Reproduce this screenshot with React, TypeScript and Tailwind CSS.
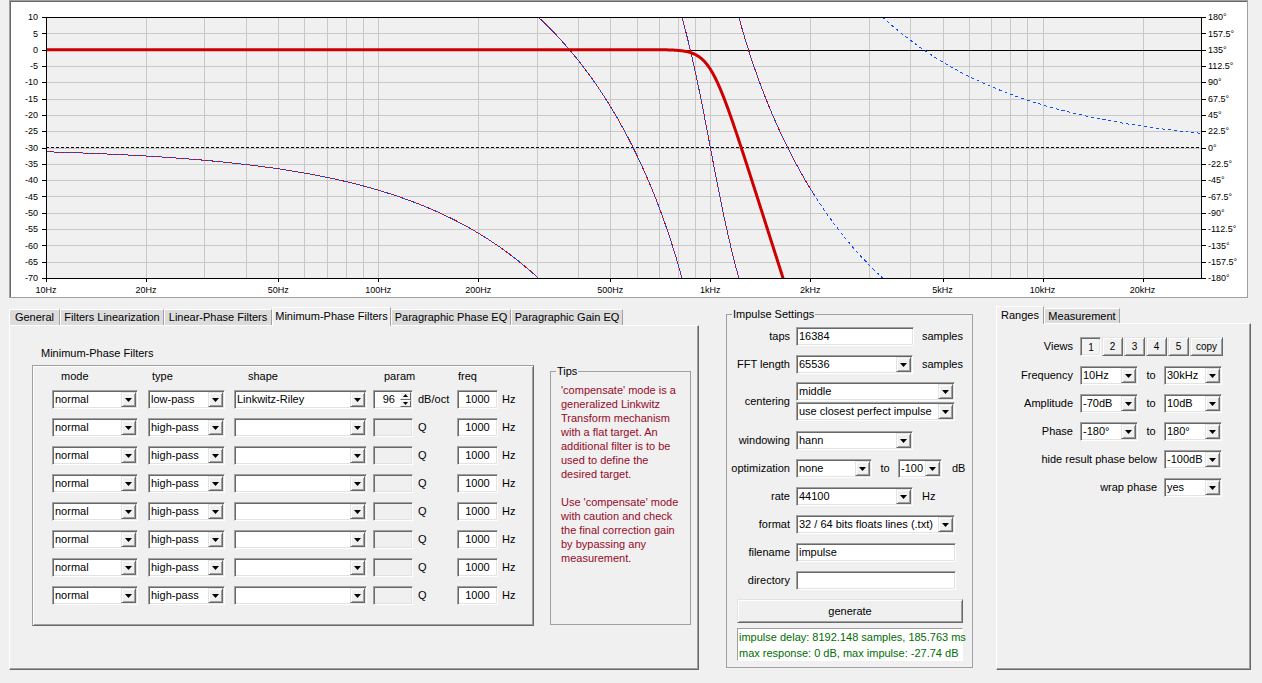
import React from "react";

// classic win32 bevels
const sunken =
  "border border-t-[#a0a0a0] border-l-[#a0a0a0] border-r-white border-b-white shadow-[inset_1px_1px_0_#696969,inset_-1px_-1px_0_#e3e3e3]";
const raised =
  "border border-t-[#e3e3e3] border-l-[#e3e3e3] border-r-[#696969] border-b-[#696969] shadow-[inset_1px_1px_0_#ffffff,inset_-1px_-1px_0_#a0a0a0]";
const raisedThin = "border border-t-white border-l-white border-r-[#696969] border-b-[#696969]";

// plot geometry
const X0 = 46;
const X1 = 1201;
const Y0 = 17;
const Y1 = 278;
const DEC = (X1 - X0) / Math.log10(3000);
const fx = (f: number) => X0 + DEC * Math.log10(f / 10);
const dby = (db: number) => Y0 + ((10 - db) * (Y1 - Y0)) / 80;
const phy = (p: number) => Y0 + ((180 - p) * (Y1 - Y0)) / 360;

// 8th order butterworth poles, squared -> LR 96 dB/oct
const POLES = Array.from({ length: 8 }, (_, i) => {
  const th = (Math.PI * (2 * (i + 1) + 7)) / 16;
  return { a: -Math.cos(th), b: Math.sin(th) };
});
const lrDb = (x: number) => -20 * Math.log10(1 + Math.pow(x, 16));
const lrPhase = (x: number) => {
  let s = 0;
  for (const p of POLES) s += Math.atan2(x - p.b, p.a);
  return (-2 * s * 180) / Math.PI;
};
const wrap = (p: number) => ((((p + 180) % 360) + 360) % 360) - 180;

function buildCurves() {
  let mag = "";
  let ph = "";
  let phRed = "";
  let prev = NaN;
  let prevPx = 0;
  let redOn = false;
  const pt = (x: number, y: number) => `${x.toFixed(2)} ${y.toFixed(2)}`;
  for (let px = X0; px <= X1 + 0.01; px += 0.25) {
    const x = (10 * Math.pow(10, (px - X0) / DEC)) / 1000;
    const db = lrDb(x);
    mag += `${mag ? "L" : "M"}${pt(px, dby(Math.max(db, -90)))}`;
    const p = wrap(lrPhase(x));
    const isRed = db > -100;
    let seg = "";
    if (isNaN(prev)) {
      seg = `M${pt(px, phy(p))}`;
    } else if (Math.abs(p - prev) > 180) {
      const s = Math.sign(p - prev);
      seg = `L${pt(px, phy(p - 360 * s))}M${pt(prevPx, phy(prev + 360 * s))}L${pt(px, phy(p))}`;
    } else {
      seg = `L${pt(px, phy(p))}`;
    }
    ph += seg;
    if (isRed) {
      phRed += redOn ? seg : `M${pt(px, phy(p))}`;
      redOn = true;
    } else redOn = false;
    prev = p;
    prevPx = px;
  }
  return { mag, ph, phRed };
}

const FREQ_LABELS: [number, string][] = [
  [10, "10Hz"],
  [20, "20Hz"],
  [50, "50Hz"],
  [100, "100Hz"],
  [200, "200Hz"],
  [500, "500Hz"],
  [1000, "1kHz"],
  [2000, "2kHz"],
  [5000, "5kHz"],
  [10000, "10kHz"],
  [20000, "20kHz"],
];

const PHASE_LABELS = [
  "180°", "157.5°", "135°", "112.5°", "90°", "67.5°", "45°", "22.5°", "0°",
  "-22.5°", "-45°", "-67.5°", "-90°", "-112.5°", "-135°", "-157.5°", "-180°",
];

function Chart() {
  const { mag, ph, phRed } = buildCurves();
  const dbs: number[] = [];
  for (let d = 10; d >= -70; d -= 5) dbs.push(d);
  const vFreqs: number[] = [];
  for (const dec of [10, 100, 1000, 10000])
    for (let m = 1; m <= 9; m++) {
      const f = dec * m;
      if (f > 10 && f < 30000) vFreqs.push(f);
    }
  const font = "Liberation Sans, Arial, sans-serif";
  return (
    <div className="ml-[9px] h-[298px] w-[1239px] border border-[#a0a0a0] bg-white shadow-[inset_1px_1px_0_#696969]">
      <svg width={1237} height={296} viewBox="10 1 1237 296" className="block">
        <defs>
          <clipPath id="plot">
            <rect x={X0} y={Y0} width={X1 - X0} height={Y1 - Y0} />
          </clipPath>
        </defs>
        <rect x={X0} y={Y0} width={X1 - X0} height={Y1 - Y0} fill="#f0f0f0" />
        <g stroke="#c8c8c8" strokeWidth={1} shapeRendering="crispEdges">
          {dbs.slice(1, -1).map((d) => {
            const y = Math.round(dby(d)) + 0.5;
            return <line key={d} x1={X0} x2={X1} y1={y} y2={y} />;
          })}
          {vFreqs.map((f) => {
            const x = Math.round(fx(f)) + 0.5;
            return <line key={f} x1={x} x2={x} y1={Y0} y2={Y1} />;
          })}
        </g>
        <line x1={X0} x2={X1} y1={50.5} y2={50.5} stroke="#000" shapeRendering="crispEdges" />
        <line x1={X0} x2={X1} y1={147.5} y2={147.5} stroke="#000" strokeDasharray="3 2" shapeRendering="crispEdges" />
        <g clipPath="url(#plot)" fill="none">
          <path d={phRed} stroke="#e00000" strokeWidth={1} shapeRendering="crispEdges" />
          <path d={ph} stroke="#0a50ff" strokeWidth={1} strokeDasharray="3 3" shapeRendering="crispEdges" />
          <path d={mag} stroke="#cc0000" strokeWidth={3} strokeLinejoin="round" />
        </g>
        <rect x={X0 + 0.5} y={Y0 + 0.5} width={X1 - X0} height={Y1 - Y0} fill="none" stroke="#000" shapeRendering="crispEdges" />
        <g stroke="#000" shapeRendering="crispEdges">
          {dbs.map((d) => {
            const y = Math.round(dby(d)) + 0.5;
            return (
              <g key={d}>
                <line x1={42} x2={X0} y1={y} y2={y} />
                <line x1={X1} x2={X1 + 5} y1={y} y2={y} />
              </g>
            );
          })}
          {FREQ_LABELS.map(([f]) => {
            const x = Math.round(fx(f)) + 0.5;
            return <line key={f} x1={x} x2={x} y1={Y1} y2={Y1 + 4} />;
          })}
        </g>
        <g fontFamily={font} fontSize={9} fill="#000">
          {dbs.map((d) => (
            <text key={d} x={38} y={dby(d) + 3.2} textAnchor="end">
              {d}
            </text>
          ))}
          {PHASE_LABELS.map((t, i) => (
            <text key={t} x={1208} y={Y0 + (i * (Y1 - Y0)) / 16 + 3.2}>
              {t}
            </text>
          ))}
          {FREQ_LABELS.map(([f, t]) => (
            <text key={t} x={fx(f)} y={292.5} textAnchor="middle">
              {t}
            </text>
          ))}
        </g>
      </svg>
    </div>
  );
}

function Arrow() {
  return (
    <svg width="7" height="4" viewBox="0 0 7 4">
      <path d="M0 0H7L3.5 4Z" fill="#000" />
    </svg>
  );
}

function Select({ value, className = "" }: { value: string; className?: string }) {
  return (
    <div className={`flex h-[19px] shrink-0 bg-white p-px ${sunken} ${className}`}>
      <div className="flex-1 overflow-hidden whitespace-nowrap pl-px leading-[15px]">{value}</div>
      <div className={`flex w-[15px] items-center justify-center bg-[#f0f0f0] ${raised}`}>
        <Arrow />
      </div>
    </div>
  );
}

function Field({
  value = "",
  className = "",
  disabled = false,
}: {
  value?: string;
  className?: string;
  disabled?: boolean;
}) {
  return (
    <div className={`h-[19px] shrink-0 p-px ${disabled ? "bg-[#f0f0f0]" : "bg-white"} ${sunken} ${className}`}>
      <div className="overflow-hidden whitespace-nowrap px-px leading-[15px]">{value}</div>
    </div>
  );
}

function Spin() {
  return (
    <div className={`flex h-[19px] w-[40px] shrink-0 bg-white p-px ${sunken}`}>
      <div className="flex-1 pr-[5px] text-right leading-[15px]">96</div>
      <div className="flex w-[11px] flex-col">
        <div className={`flex flex-1 items-center justify-center bg-[#f0f0f0] ${raisedThin}`}>
          <svg width="5" height="3" viewBox="0 0 5 3">
            <path d="M0 3H5L2.5 0Z" fill="#000" />
          </svg>
        </div>
        <div className={`flex flex-1 items-center justify-center bg-[#f0f0f0] ${raisedThin}`}>
          <svg width="5" height="3" viewBox="0 0 5 3">
            <path d="M0 0H5L2.5 3Z" fill="#000" />
          </svg>
        </div>
      </div>
    </div>
  );
}

const MAIN_TABS: [string, string][] = [
  ["General", "w-[51px]"],
  ["Filters Linearization", "w-[104px]"],
  ["Linear-Phase Filters", "w-[108px]"],
  ["Minimum-Phase Filters", "w-[119px]"],
  ["Paragraphic Phase EQ", "w-[120px]"],
  ["Paragraphic Gain EQ", "w-[112px]"],
];

const TIPS = [
  "'compensate' mode is a",
  "generalized Linkwitz",
  "Transform mechanism",
  "with a flat target. An",
  "additional filter is to be",
  "used to define the",
  "desired target.",
  "",
  "Use 'compensate' mode",
  "with caution and check",
  "the final correction gain",
  "by bypassing any",
  "measurement.",
];

function FilterRow({ first }: { first: boolean }) {
  return (
    <div className="flex h-[19px] items-center pl-[19px]">
      <Select value="normal" className="mr-[10px] w-[86px]" />
      <Select value={first ? "low-pass" : "high-pass"} className="mr-[9px] w-[77px]" />
      <Select value={first ? "Linkwitz-Riley" : ""} className="mr-[6px] w-[133px]" />
      <div className="mr-[5px]">{first ? <Spin /> : <Field disabled className="w-[40px]" />}</div>
      <span className="w-[39px]">{first ? "dB/oct" : "Q"}</span>
      <div className={`mr-[4px] h-[19px] w-[41px] bg-white p-px text-center leading-[15px] ${sunken}`}>1000</div>
      <span>Hz</span>
    </div>
  );
}

function FiltersPanel() {
  return (
    <div className="ml-[9px] mt-[9px] w-[690px] shrink-0">
      <div className="flex h-[18px] items-end">
        {MAIN_TABS.map(([t, w]) => {
          const sel = t === "Minimum-Phase Filters";
          return (
            <div
              key={t}
              className={`${w} flex items-center justify-center whitespace-nowrap border border-b-0 border-t-white border-l-white border-r-[#a0a0a0] ${
                sel ? "relative z-10 -mb-px h-[19px] bg-[#f0f0f0] pb-[2px]" : "h-[16px] bg-[#dcdcdc]"
              }`}
            >
              {t}
            </div>
          );
        })}
      </div>
      <div className="flex h-[345px] border border-t-white border-l-white border-r-[#696969] border-b-[#696969] shadow-[inset_-1px_-1px_0_#a0a0a0]">
        <div className="ml-[22px] w-[502px]">
          <div className="mt-[21px] h-[13px] pl-[9px] leading-[13px]">Minimum-Phase Filters</div>
          <div className="mt-[5px] h-[261px] border border-t-[#a0a0a0] border-l-[#a0a0a0] border-r-[#696969] border-b-[#696969] shadow-[inset_1px_1px_0_#ffffff,inset_-1px_-1px_0_#a0a0a0]">
            <div className="mt-[4px] flex h-[13px] pl-[19px] leading-[13px]">
              <span className="w-[96px] pl-[9px]">mode</span>
              <span className="w-[86px] pl-[4px]">type</span>
              <span className="w-[139px] pl-[14px]">shape</span>
              <span className="w-[84px] pl-[11px]">param</span>
              <span className="pl-[1px]">freq</span>
            </div>
            <div className="mt-[7px] flex flex-col gap-[9px]">
              {Array.from({ length: 8 }, (_, i) => (
                <FilterRow key={i} first={i === 0} />
              ))}
            </div>
          </div>
        </div>
        <fieldset className="ml-[16px] mt-[39px] h-[260px] w-[141px] border border-[#a0a0a0]">
          <legend className="ml-[5px] px-px leading-[13px]">Tips</legend>
          <div className="mt-[5px] pl-[10px] leading-[14px] text-[#960a28]">
            {TIPS.map((l, i) => (
              <div key={i} className="h-[14px] whitespace-nowrap">
                {l}
              </div>
            ))}
          </div>
        </fieldset>
      </div>
    </div>
  );
}

function IRow({ label, className = "", children }: { label: string; className?: string; children: React.ReactNode }) {
  return (
    <div className={`flex items-center ${className}`}>
      <span className="w-[63px] shrink-0 whitespace-nowrap text-right">{label}</span>
      <div className="ml-[6px] flex items-center">{children}</div>
    </div>
  );
}

function ImpulseSettings() {
  return (
    <fieldset className="ml-[27px] mt-[10px] h-[360px] w-[247px] shrink-0 border border-[#a0a0a0]">
      <legend className="ml-[5px] px-px leading-[13px]">Impulse Settings</legend>
      <IRow label="taps" className="mt-[6px] h-[19px]">
        <Field value="16384" className="w-[118px]" />
        <span className="ml-[8px]">samples</span>
      </IRow>
      <IRow label="FFT length" className="mt-[9px] h-[19px]">
        <Select value="65536" className="w-[117px]" />
        <span className="ml-[9px]">samples</span>
      </IRow>
      <IRow label="centering" className="mt-[8px]">
        <div className="flex flex-col gap-px">
          <Select value="middle" className="w-[159px]" />
          <Select value="use closest perfect impulse" className="w-[159px]" />
        </div>
      </IRow>
      <IRow label="windowing" className="mt-[10px] h-[19px]">
        <Select value="hann" className="w-[117px]" />
      </IRow>
      <IRow label="optimization" className="mt-[9px] h-[19px]">
        <Select value="none" className="w-[76px]" />
        <span className="w-[26px] text-center">to</span>
        <Select value="-100" className="w-[44px]" />
        <span className="ml-[10px]">dB</span>
      </IRow>
      <IRow label="rate" className="mt-[9px] h-[19px]">
        <Select value="44100" className="w-[117px]" />
        <span className="ml-[9px]">Hz</span>
      </IRow>
      <IRow label="format" className="mt-[9px] h-[19px]">
        <Select value="32 / 64 bits floats lines (.txt)" className="w-[159px]" />
      </IRow>
      <IRow label="filename" className="mt-[9px] h-[19px]">
        <Field value="impulse" className="w-[160px]" />
      </IRow>
      <IRow label="directory" className="mt-[9px] h-[19px]">
        <Field className="w-[160px]" />
      </IRow>
      <div className={`ml-[10px] mt-[9px] flex h-[24px] w-[226px] items-center justify-center bg-[#f0f0f0] ${raised}`}>
        generate
      </div>
      <div className="ml-[10px] mt-[5px] h-[33px] w-[226px] border border-t-[#a0a0a0] border-l-[#a0a0a0] border-r-white border-b-white bg-white pl-px leading-[16px] text-[#006e00]">
        <div className="whitespace-nowrap">impulse delay: 8192.148 samples, 185.763 ms</div>
        <div className="whitespace-nowrap">max response: 0 dB, max impulse: -27.74 dB</div>
      </div>
    </fieldset>
  );
}

function RangeRow({ label, from, to, className = "" }: { label: string; from: string; to: string; className?: string }) {
  return (
    <div className={`flex h-[19px] items-center ${className}`}>
      <span className="w-[76px] text-right">{label}</span>
      <Select value={from} className="ml-[7px] w-[58px]" />
      <span className="w-[26px] text-center">to</span>
      <Select value={to} className="w-[58px]" />
    </div>
  );
}

function Ranges() {
  const views = ["1", "2", "3", "4", "5"];
  return (
    <div className="ml-[23px] mt-[8px] w-[255px] shrink-0">
      <div className="flex h-[17px] items-end">
        <div className="relative z-10 -mb-px flex h-[18px] w-[48px] items-center justify-center border border-b-0 border-t-white border-l-white border-r-[#a0a0a0] bg-[#f0f0f0] pb-px">
          Ranges
        </div>
        <div className="flex h-[15px] w-[76px] items-center justify-center border border-b-0 border-t-white border-l-white border-r-[#a0a0a0] bg-[#dcdcdc]">
          Measurement
        </div>
      </div>
      <div className="h-[347px] border border-t-white border-l-white border-r-[#696969] border-b-[#696969] shadow-[inset_-1px_-1px_0_#a0a0a0] pt-[13px]">
        <div className="flex h-[19px] items-center">
          <span className="w-[76px] text-right">Views</span>
          <div className="ml-[7px] flex gap-px">
            {views.map((v) => (
              <div
                key={v}
                className={`flex h-[19px] w-[21px] items-center justify-center text-[10px] ${
                  v === "1" ? `bg-[#f4f4f4] pl-px pt-px ${sunken}` : `bg-[#f0f0f0] ${raised}`
                }`}
              >
                {v}
              </div>
            ))}
            <div className={`flex h-[19px] w-[33px] items-center justify-center bg-[#f0f0f0] text-[10px] ${raised}`}>copy</div>
          </div>
        </div>
        <RangeRow label="Frequency" from="10Hz" to="30kHz" className="mt-[10px]" />
        <RangeRow label="Amplitude" from="-70dB" to="10dB" className="mt-[9px]" />
        <RangeRow label="Phase" from="-180°" to="180°" className="mt-[9px]" />
        <div className="mt-[9px] flex h-[19px] items-center">
          <span className="w-[160px] text-right">hide result phase below</span>
          <Select value="-100dB" className="ml-[7px] w-[58px]" />
        </div>
        <div className="mt-[9px] flex h-[19px] items-center">
          <span className="w-[160px] text-right">wrap phase</span>
          <Select value="yes" className="ml-[7px] w-[58px]" />
        </div>
      </div>
    </div>
  );
}

export default function App() {
  return (
    <div className="h-[683px] w-[1262px] overflow-hidden bg-[#f0f0f0] font-['Liberation_Sans',Arial,sans-serif] text-[11px] text-black">
      <Chart />
      <div className="flex items-start">
        <FiltersPanel />
        <ImpulseSettings />
        <Ranges />
      </div>
    </div>
  );
}
